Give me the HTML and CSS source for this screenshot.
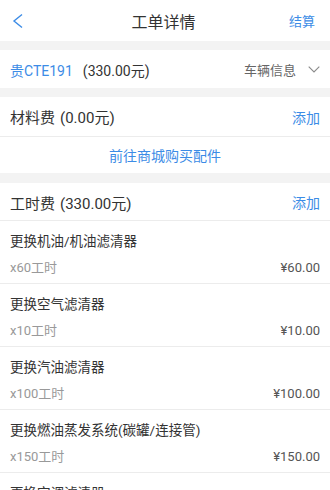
FILE: index.html
```html
<!DOCTYPE html>
<html lang="zh-CN">
<head>
<meta charset="utf-8">
<title>工单详情</title>
<link rel="stylesheet" href="styles.css">
</head>
<body>
<div class="page">
  <header class="topbar">
    <span class="back">
      <svg width="12" height="16" viewBox="0 0 12 16"><polyline points="10,1.5 2,8 10,14.5" fill="none" stroke="#3c8ce6" stroke-width="1.4" stroke-linejoin="miter"/></svg>
    </span>
    <span class="title">工单详情</span>
    <span class="action">结算</span>
  </header>

  <section class="card car">
    <div class="row">
      <span class="plate">贵CTE191</span><span class="sum">(330.00元)</span>
      <span class="spacer"></span>
      <span class="carinfo">车辆信息</span>
      <svg class="down" width="12" height="7" viewBox="0 0 12 7"><polyline points="0.7,0.7 6,6 11.3,0.7" fill="none" stroke="#8a8a8a" stroke-width="1.1"/></svg>
    </div>
  </section>

  <section class="card">
    <div class="row head bordered">
      <span class="label">材料费</span><span class="label amt">(0.00元)</span>
      <span class="spacer"></span>
      <span class="add">添加</span>
    </div>
    <div class="link">前往商城购买配件</div>
  </section>

  <section class="card">
    <div class="row head2 bordered">
      <span class="label">工时费</span><span class="label amt">(330.00元)</span>
      <span class="spacer"></span>
      <span class="add">添加</span>
    </div>
    <div class="item">
      <div class="name">更换机油/机油滤清器</div>
      <div class="meta"><span class="hours">x60工时</span><span class="price">¥60.00</span></div>
    </div>
    <div class="item">
      <div class="name">更换空气滤清器</div>
      <div class="meta"><span class="hours">x10工时</span><span class="price">¥10.00</span></div>
    </div>
    <div class="item">
      <div class="name">更换汽油滤清器</div>
      <div class="meta"><span class="hours">x100工时</span><span class="price">¥100.00</span></div>
    </div>
    <div class="item">
      <div class="name">更换燃油蒸发系统(碳罐/连接管)</div>
      <div class="meta"><span class="hours">x150工时</span><span class="price">¥150.00</span></div>
    </div>
    <div class="item">
      <div class="name">更换空调滤清器</div>
      <div class="meta"><span class="hours">x20工时</span><span class="price">¥20.00</span></div>
    </div>
  </section>
</div>
</body>
</html>
```

FILE: styles.css
```css
html, body {
  margin: 0;
  padding: 0;
  background: #f3f3f3;
  font-family: Roboto, "Noto Sans CJK SC", sans-serif;
  color: #333;
}
.page {
  display: flex;
  flex-direction: column;
  width: 330px;
  height: 490px;
  overflow: hidden;
}
.topbar {
  height: 41px;
  flex: none;
  background: #fff;
  display: flex;
  align-items: center;
  justify-content: space-between;
  padding: 0 15px 0 12px;
  box-sizing: border-box;
  margin-bottom: 9px;
}
.back {
  width: 40px;
  display: flex;
  align-items: center;
  padding-top: 1px;
}
.title {
  font-size: 16px;
  color: #333;
}
.action {
  width: 40px;
  text-align: right;
  font-size: 13px;
  color: #3c8ce6;
}
.card {
  background: #fff;
  flex: none;
  margin-bottom: 9px;
}
.card.car + .card {
  margin-bottom: 10px;
}
.row {
  display: flex;
  align-items: center;
  padding: 0 10px;
  box-sizing: border-box;
}
.car .row {
  height: 38px;
  padding-top: 1px;
}
.spacer { flex: 1; }
.plate {
  font-size: 14px;
  color: #3c8ce6;
}
.sum {
  font-size: 14px;
  color: #333;
  margin-left: 10px;
}
.carinfo {
  font-size: 13px;
  color: #666;
  margin-right: 12px;
}
.bordered {
  border-bottom: 1px solid #ececec;
}
.head {
  height: 40px;
}
.head2 {
  height: 38px;
  padding-top: 1px;
}
.label {
  font-size: 15px;
  color: #333;
}
.amt {
  margin-left: 5px;
}
.add {
  font-size: 14px;
  color: #3c8ce6;
}
.link {
  height: 36px;
  display: flex;
  align-items: center;
  justify-content: center;
  font-size: 14px;
  color: #3c8ce6;
}
.item {
  padding: 10px 10px 5px;
  border-bottom: 1px solid #ececec;
}
.name {
  font-size: 13.5px;
  line-height: 20px;
  color: #333;
}
.meta {
  display: flex;
  justify-content: space-between;
  margin-top: 7px;
  line-height: 20px;
  font-size: 13px;
}
.hours { color: #999; }
.price { color: #555; }
```
